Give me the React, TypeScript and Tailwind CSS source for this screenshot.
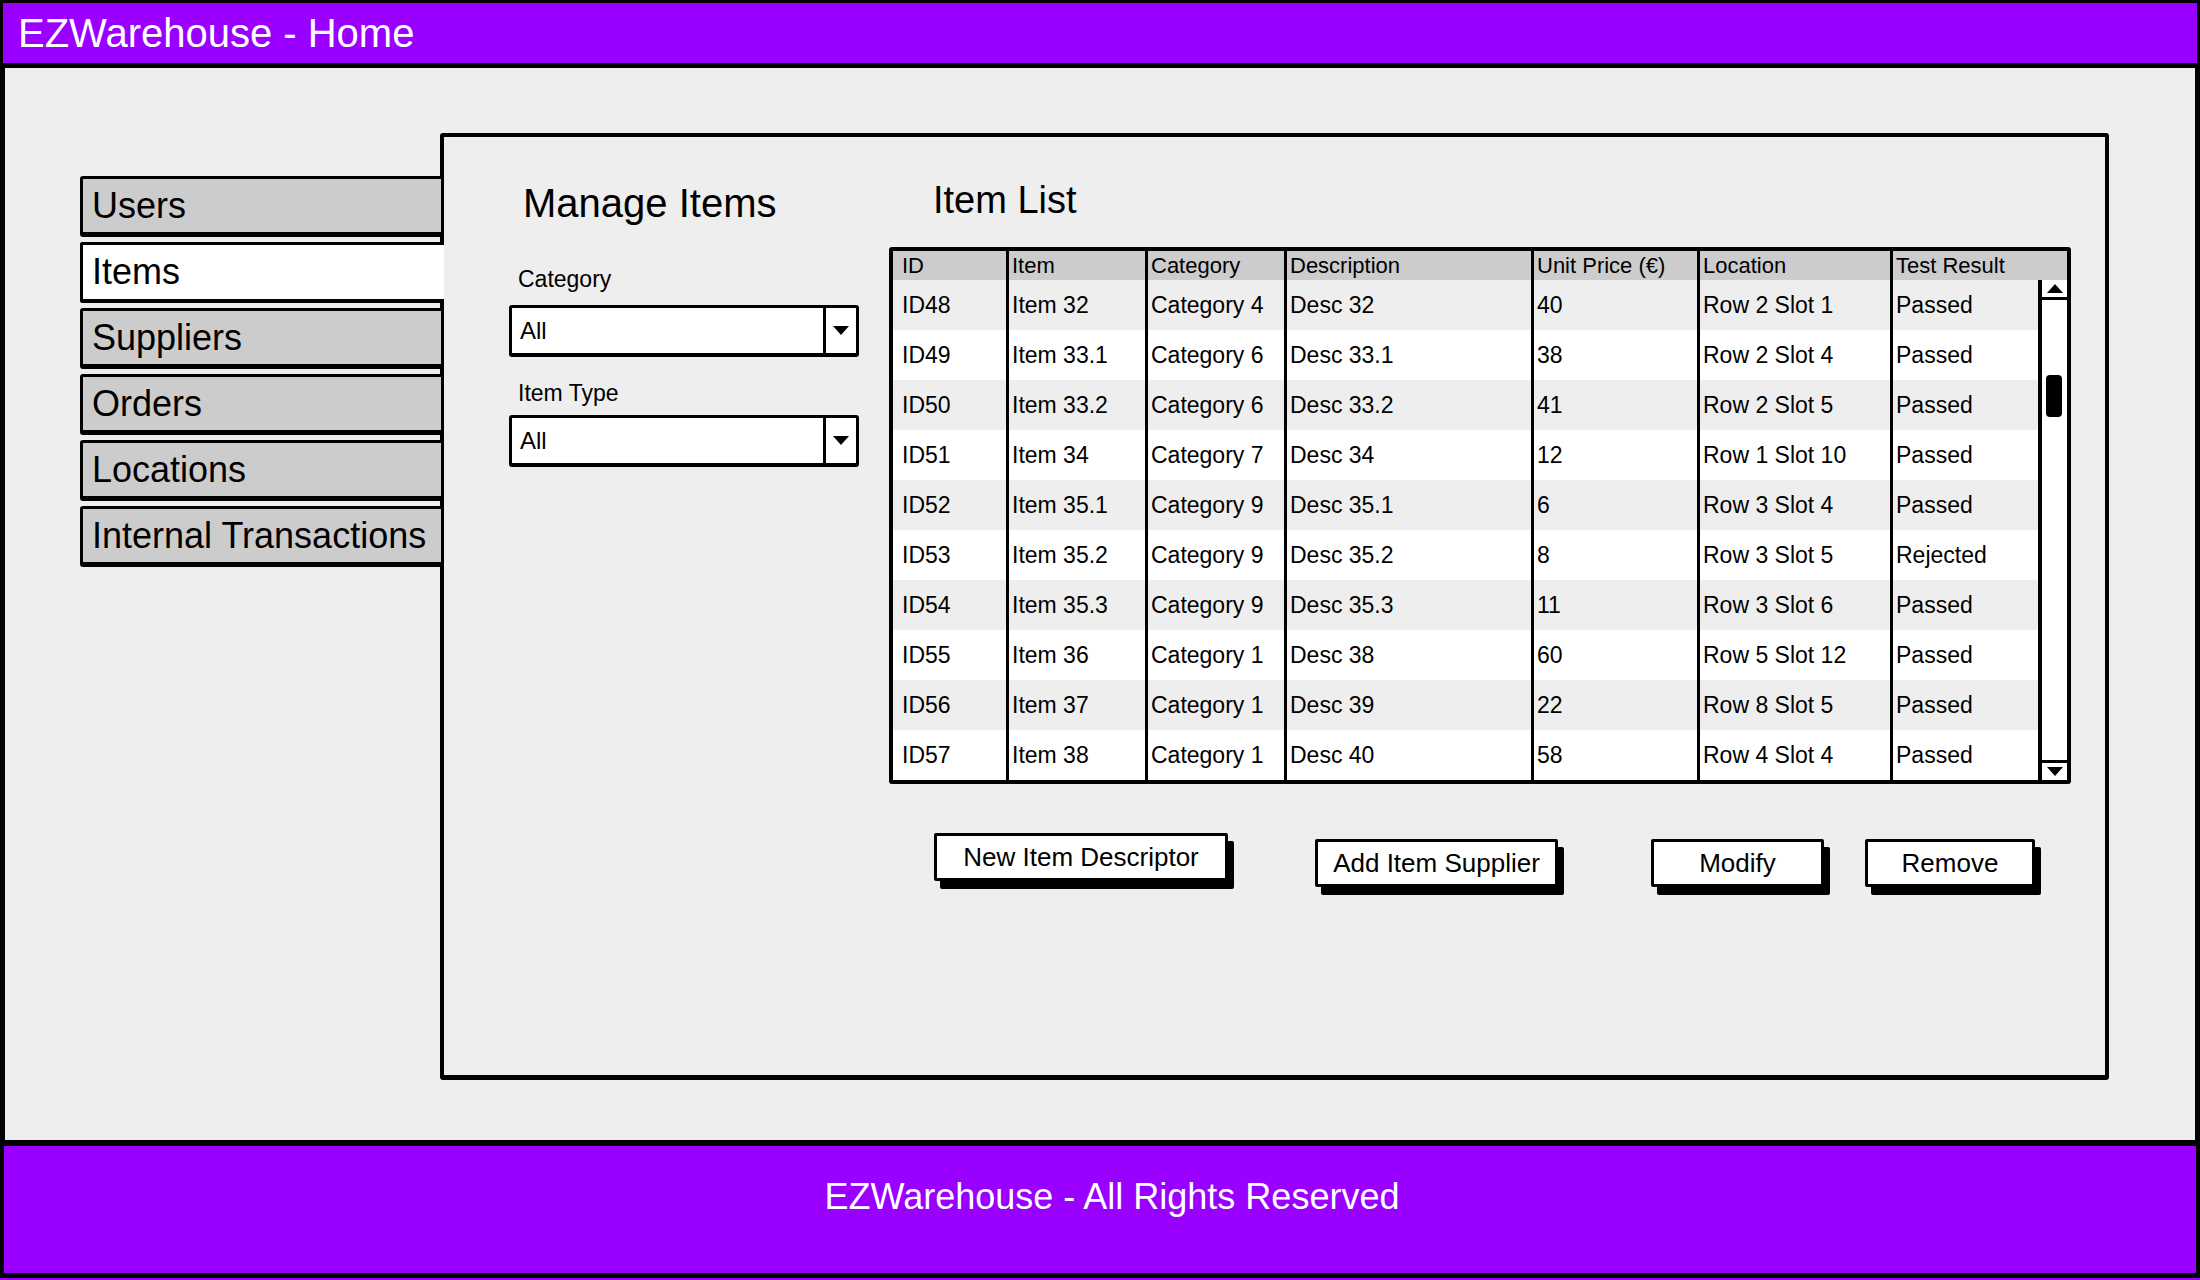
const rows = [
  ["ID48", "Item 32", "Category 4", "Desc 32", "40", "Row 2 Slot 1", "Passed"],
  ["ID49", "Item 33.1", "Category 6", "Desc 33.1", "38", "Row 2 Slot 4", "Passed"],
  ["ID50", "Item 33.2", "Category 6", "Desc 33.2", "41", "Row 2 Slot 5", "Passed"],
  ["ID51", "Item 34", "Category 7", "Desc 34", "12", "Row 1 Slot 10", "Passed"],
  ["ID52", "Item 35.1", "Category 9", "Desc 35.1", "6", "Row 3 Slot 4", "Passed"],
  ["ID53", "Item 35.2", "Category 9", "Desc 35.2", "8", "Row 3 Slot 5", "Rejected"],
  ["ID54", "Item 35.3", "Category 9", "Desc 35.3", "11", "Row 3 Slot 6", "Passed"],
  ["ID55", "Item 36", "Category 1", "Desc 38", "60", "Row 5 Slot 12", "Passed"],
  ["ID56", "Item 37", "Category 1", "Desc 39", "22", "Row 8 Slot 5", "Passed"],
  ["ID57", "Item 38", "Category 1", "Desc 40", "58", "Row 4 Slot 4", "Passed"],
];

const headers = ["ID", "Item", "Category", "Description", "Unit Price (€)", "Location", "Test Result"];

const tabs = ["Users", "Items", "Suppliers", "Orders", "Locations", "Internal Transactions"];

function Select() {
  return (
    <div className="flex h-[52px] w-[350px] rounded-[3px] border-[3px] border-b-[4px] border-black bg-white">
      <div className="flex flex-1 items-center pl-[8px] text-[24px] leading-none">All</div>
      <div className="flex w-[33px] items-center justify-center border-l-[3px] border-black">
        <span className="h-0 w-0 border-x-[8px] border-t-[9px] border-x-transparent border-t-black" />
      </div>
    </div>
  );
}

function Cell({ i, children }: { i: number; children: React.ReactNode }) {
  return (
    <div
      className={
        i === 0
          ? "flex items-center whitespace-nowrap pl-[9px]"
          : "flex items-center whitespace-nowrap border-l-[3px] border-black pl-[3px]"
      }
    >
      {children}
    </div>
  );
}

function ItemTable() {
  return (
    <div className="w-[1182px] rounded-[3px] border-[4px] border-black bg-white leading-none">
      <div className="grid h-[29px] grid-cols-[113px_139px_139px_247px_166px_193px_177px] bg-[#cccccc] text-[22px]">
        {headers.map((h, i) => (
          <Cell key={h} i={i}>
            {h}
          </Cell>
        ))}
      </div>
      <div className="flex text-[23px]">
        <div className="w-[1145px]">
          {rows.map((r, ri) => (
            <div
              key={r[0]}
              className={
                ri % 2 === 0
                  ? "grid h-[50px] grid-cols-[113px_139px_139px_247px_166px_193px_148px] bg-[#eeeeee]"
                  : "grid h-[50px] grid-cols-[113px_139px_139px_247px_166px_193px_148px] bg-white"
              }
            >
              {r.map((c, i) => (
                <Cell key={i} i={i}>
                  {c}
                </Cell>
              ))}
            </div>
          ))}
        </div>
        <div className="flex w-[29px] flex-col border-l-[4px] border-black bg-white">
          <div className="flex h-[20px] items-center justify-center border-b-[3px] border-black">
            <span className="h-0 w-0 border-x-[8px] border-b-[9px] border-x-transparent border-b-black" />
          </div>
          <div className="flex-1 pl-[4px] pt-[75px]">
            <div className="h-[42px] w-[16px] rounded-[4px] bg-black" />
          </div>
          <div className="flex h-[20px] items-center justify-center border-t-[3px] border-black">
            <span className="h-0 w-0 border-x-[8px] border-t-[9px] border-x-transparent border-t-black" />
          </div>
        </div>
      </div>
    </div>
  );
}

function SketchButton({ label, w, className }: { label: string; w: string; className: string }) {
  return (
    <button
      className={`flex h-[48px] items-center justify-center rounded-[2px] border-[3px] border-black bg-white text-[26px] leading-none text-black shadow-[6px_8px_0_0_#000] ${w} ${className}`}
    >
      {label}
    </button>
  );
}

export default function App() {
  return (
    <div
      className="flex h-[1280px] w-[2200px] flex-col bg-[#eeeeee] text-black"
      style={{ fontFamily: '"Liberation Sans", Arial, sans-serif' }}
    >
      <header className="flex h-[68px] items-center border-[3px] border-b-[5px] border-black bg-[#9900ff] pl-[15px]">
        <h1 className="text-[40px] leading-none text-white">EZWarehouse - Home</h1>
      </header>

      <main className="flex flex-1 items-start border-x-[5px] border-black pl-[75px] pt-[65px]">
        <nav className="relative z-10 -mr-[4px] mt-[43px] flex w-[364px] flex-col gap-[5px]">
          {tabs.map((t) => (
            <div
              key={t}
              className={
                t === "Items"
                  ? "flex h-[61px] items-center rounded-l-[3px] border-[3px] border-b-[4px] border-r-0 border-black bg-white pl-[9px] text-[36px] leading-none"
                  : "flex h-[61px] items-center rounded-[3px] border-[3px] border-b-[5px] border-black bg-[#cccccc] pl-[9px] text-[36px] leading-none"
              }
            >
              {t}
            </div>
          ))}
        </nav>

        <section className="flex h-[947px] w-[1669px] rounded-[3px] border-[4px] border-b-[5px] border-black pl-[65px]">
          <div className="flex w-[350px] flex-col pt-[46px]">
            <h2 className="pl-[14px] text-[40px] leading-none">Manage Items</h2>
            <label className="mt-[45px] pl-[9px] text-[23px] leading-none">Category</label>
            <div className="mt-[14px]">
              <Select />
            </div>
            <label className="mt-[25px] pl-[9px] text-[23px] leading-none">Item Type</label>
            <div className="mt-[10px]">
              <Select />
            </div>
          </div>

          <div className="ml-[30px] flex flex-col pt-[44px]">
            <h2 className="pl-[44px] text-[38px] leading-none">Item List</h2>
            <div className="mt-[28px]">
              <ItemTable />
            </div>
            <div className="flex items-start">
              <SketchButton label="New Item Descriptor" w="w-[294px]" className="ml-[45px] mt-[49px]" />
              <SketchButton label="Add Item Supplier" w="w-[243px]" className="ml-[87px] mt-[55px]" />
              <SketchButton label="Modify" w="w-[173px]" className="ml-[93px] mt-[55px]" />
              <SketchButton label="Remove" w="w-[170px]" className="ml-[41px] mt-[55px]" />
            </div>
          </div>
        </section>
      </main>

      <div className="bg-[#9900ff] pb-[2px]">
        <footer className="flex h-[138px] items-center justify-center border-x-[4px] border-b-[5px] border-t-[6px] border-black bg-[#9900ff] pb-[25px] pl-[24px]">
          <p className="text-[36px] leading-none text-white">EZWarehouse - All Rights Reserved</p>
        </footer>
      </div>
    </div>
  );
}
